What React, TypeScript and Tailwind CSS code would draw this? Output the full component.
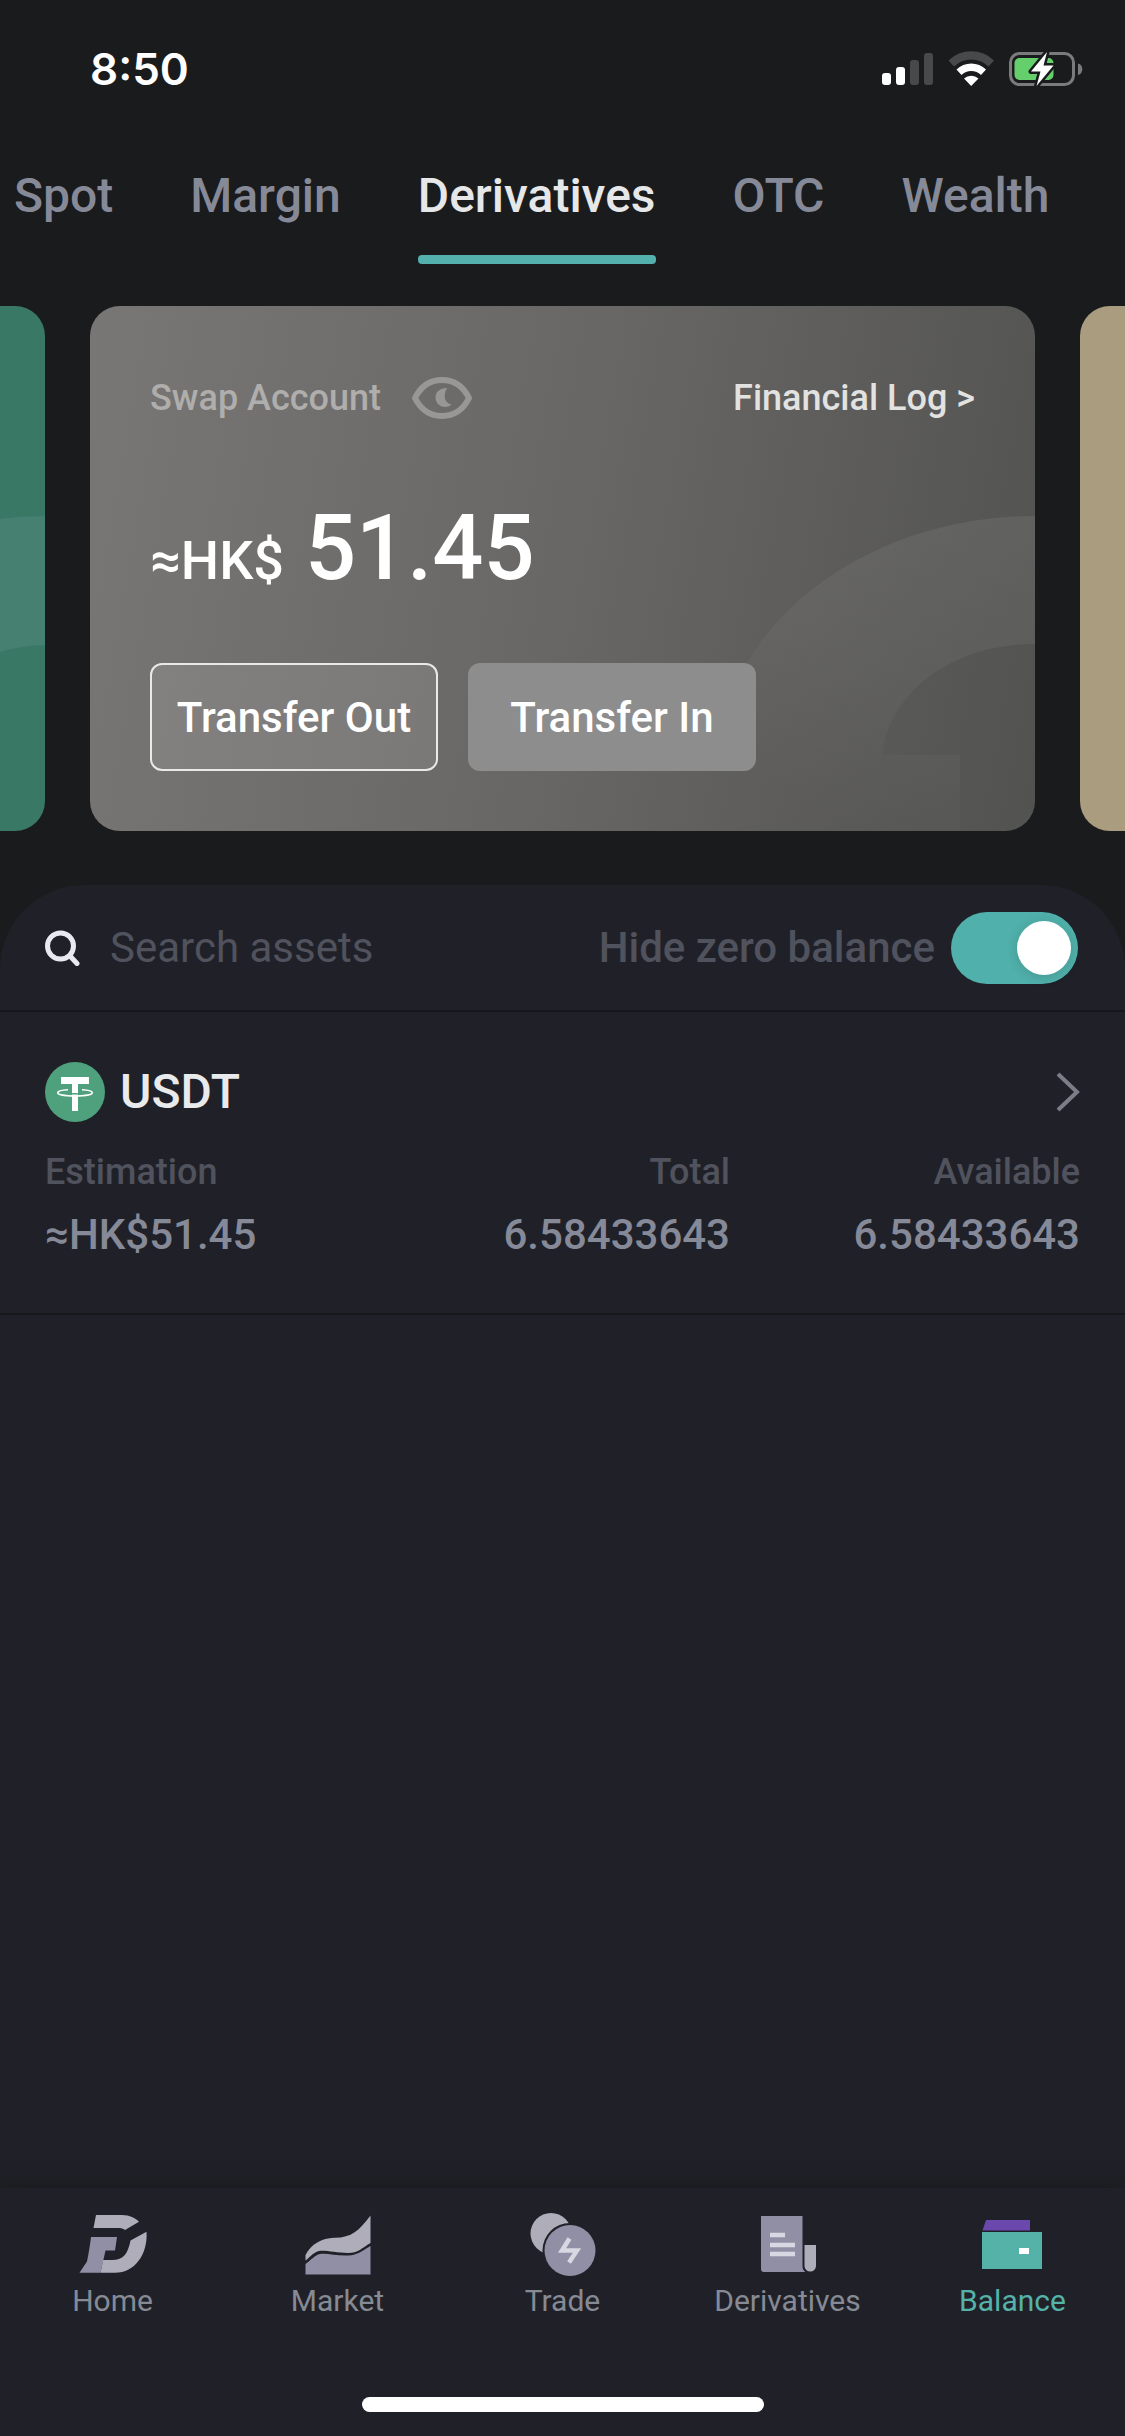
import { useState } from "react";
import type { ReactNode } from "react";

const tabs = ["Spot", "Margin", "Derivatives", "OTC", "Wealth"];

const assets = [
  {
    symbol: "USDT",
    estimation: "≈HK$51.45",
    total: "6.58433643",
    available: "6.58433643",
  },
];

function StatusBar() {
  return (
    <div className="flex items-center justify-between h-[132px] pt-10 pb-[34px] pl-[90px] pr-[41px]">
      <span className="font-['Inter',sans-serif] text-[44px] font-semibold leading-[56px] text-white">
        8:50
      </span>
      <svg width="202" height="36" viewBox="0 0 202 36" aria-hidden="true">
        <rect x="0" y="22" width="9" height="12" rx="3" fill="#fff" />
        <rect x="14" y="16" width="9" height="18" rx="3" fill="#fff" />
        <rect x="28" y="9" width="9" height="25" rx="3" fill="#48494b" />
        <rect x="42" y="2" width="9" height="32" rx="3" fill="#48494b" />
        <path
          d="M66.5 9.5A32.5 32.5 0 0 1 112 9.5L106.5 15.5A24.5 24.5 0 0 0 72 15.5Z"
          fill="#48494b"
        />
        <path
          d="M74.5 18.5A21 21 0 0 1 104 18.5L99 24A14 14 0 0 0 79.5 24Z"
          fill="#fff"
        />
        <path d="M82 27.5A11 11 0 0 1 96.5 27.5L89.2 35Z" fill="#fff" />
        <rect
          x="128.5"
          y="2.5"
          width="63"
          height="31"
          rx="9"
          fill="none"
          stroke="#7b7b7d"
          strokeWidth="3"
        />
        <path d="M196 12.5a6 6 0 0 1 0 11.5Z" fill="#7b7b7d" />
        <rect x="132.5" y="7" width="39" height="22" rx="5" fill="#65d06b" />
        <path
          d="M165 1L149 20.5h9.5L154.5 35L171.5 14.5h-10Z"
          fill="#fff"
          stroke="#1a1b1d"
          strokeWidth="5"
          strokeLinejoin="round"
          paintOrder="stroke"
        />
      </svg>
    </div>
  );
}

interface AccountTabsProps {
  active: string;
  onSelect: (tab: string) => void;
}

function AccountTabs({ active, onSelect }: AccountTabsProps) {
  return (
    <nav className="flex gap-[77px] pl-[14px] pt-[34px] overflow-hidden">
      {tabs.map((tab) => (
        <button
          key={tab}
          onClick={() => onSelect(tab)}
          className={`flex flex-col gap-[29px] shrink-0 text-[48px] leading-[60px] font-medium ${
            tab === active ? "text-[#e6e7e9]" : "text-[#868a98]"
          }`}
        >
          {tab}
          {tab === active && (
            <span className="block h-[9px] w-full rounded-[4px] bg-[#54b0ad]" />
          )}
        </button>
      ))}
    </nav>
  );
}

function CardRing({ className }: { className: string }) {
  return (
    <svg
      className={className}
      width="320"
      height="315"
      viewBox="0 0 320 315"
      aria-hidden="true"
    >
      <defs>
        <linearGradient id="ring" x1="0.8" y1="0" x2="0.3" y2="1">
          <stop offset="0" stopColor="#fff" stopOpacity="0.07" />
          <stop offset="0.5" stopColor="#fff" stopOpacity="0.04" />
          <stop offset="0.95" stopColor="#fff" stopOpacity="0" />
        </linearGradient>
      </defs>
      <path
        d="M320 0A320 260 0 0 0 0 260V315H245V239H167C173 182 230 128 320 128Z"
        fill="url(#ring)"
      />
    </svg>
  );
}

function AccountCard() {
  return (
    <section className="relative flex-1 flex flex-col h-[525px] px-[60px] pt-[68px] pb-[60px] rounded-[30px] overflow-hidden bg-linear-100 from-[#797776] via-[#686765] to-[#525251]">
      <CardRing className="absolute right-0 bottom-0" />
      <div className="relative flex items-center justify-between text-[36px] leading-[48px]">
        <div className="flex items-center gap-[30px]">
          <h2 className="font-medium text-[#afaeac]">Swap Account</h2>
          <button aria-label="Hide balance">
            <svg width="62" height="44" viewBox="0 0 62 44" aria-hidden="true">
              <path
                d="M4 22C10 10 20 4 31 4s21 6 27 18c-6 12-16 18-27 18S10 34 4 22Z"
                fill="none"
                stroke="#989796"
                strokeWidth="6"
                strokeLinejoin="round"
              />
              <path
                d="M36 12c-7 0-11.5 4-11.5 9.500S29 31 34 31c3 0 5-1 6.500-2.500C33 27 32 19 36 12Z"
                fill="#989796"
              />
            </svg>
          </button>
        </div>
        <a href="#log" className="font-medium text-[#e2e2e1]">
          Financial Log &gt;
        </a>
      </div>
      <p className="relative flex items-baseline gap-[21px] mt-[67px] font-medium leading-[120px] text-white">
        <span className="text-[54px]">≈HK$</span>
        <span className="text-[90px]">51.45</span>
      </p>
      <div className="relative mt-auto flex gap-[30px] text-[42px] font-medium text-white">
        <button className="h-[108px] w-72 rounded-xl border-2 border-[#e9e9e8] bg-white/10">
          Transfer Out
        </button>
        <button className="h-[108px] w-72 rounded-xl bg-[#8d8d8d]">
          Transfer In
        </button>
      </div>
    </section>
  );
}

function PreviousCard() {
  return (
    <div className="w-[45px] rounded-r-[30px] overflow-hidden bg-[#3a7866]">
      <svg className="mt-[210px]" width="45" height="136" viewBox="0 0 45 136" aria-hidden="true">
        <path d="M0 3Q22 0 45 0V129Q18 130 0 136Z" fill="#458070" />
      </svg>
    </div>
  );
}

interface FilterBarProps {
  hideZero: boolean;
  onToggle: (value: boolean) => void;
}

function FilterBar({ hideZero, onToggle }: FilterBarProps) {
  return (
    <div className="flex items-center justify-between h-[127px] pl-[45px] pr-[47px] border-b-2 border-[#16161b]">
      <label className="flex items-center gap-[30px]">
        <svg width="35" height="36" viewBox="0 0 35 36" aria-hidden="true">
          <circle cx="15.5" cy="16" r="13" fill="none" stroke="#e9e9f2" strokeWidth="5" />
          <path d="M25 26l7 7.500" stroke="#e9e9f2" strokeWidth="5" strokeLinecap="round" />
        </svg>
        <input
          type="text"
          aria-label="Search assets"
          placeholder="Search assets"
          className="w-[400px] bg-transparent text-[42px] leading-[54px] text-white outline-none placeholder:text-[#50525d]"
        />
      </label>
      <label className="flex items-center gap-4 text-[42px] leading-[54px] font-medium text-[#50525d]">
        Hide zero balance
        <input
          type="checkbox"
          role="switch"
          checked={hideZero}
          onChange={(e) => onToggle(e.target.checked)}
          className="peer sr-only"
        />
        <span className="flex items-center h-[72px] w-[127px] p-[7px] rounded-full bg-[#484a55] peer-checked:bg-[#50b0ab] peer-checked:justify-end">
          <span className="size-[54px] rounded-full bg-white shadow-[0_2px_12px_rgba(0,0,0,0.15)]" />
        </span>
      </label>
    </div>
  );
}

function TetherIcon() {
  return (
    <svg width="60" height="60" viewBox="0 0 60 60" aria-hidden="true">
      <circle cx="30" cy="30" r="30" fill="#4fa07c" />
      <path d="M16 15h28v7H33v27h-6V22H16Z" fill="#fff" />
      <path
        d="M23 27.7C16 28 12.700 29.300 12.700 30.700C12.700 32.600 20 34 30 34S47.300 32.600 47.300 30.700C47.300 29.300 44 28 37 27.700"
        fill="none"
        stroke="#fff"
        strokeWidth="1.600"
      />
      <path d="M26 31.800h8" stroke="#4fa07c" strokeWidth="1.500" />
    </svg>
  );
}

interface AssetFieldProps {
  label: string;
  value: string;
  className?: string;
}

function AssetField({ label, value, className = "flex-1" }: AssetFieldProps) {
  return (
    <div className={`flex flex-col gap-[9px] ${className}`}>
      <dt className="text-[36px] leading-[48px] font-medium text-[#50525d]">{label}</dt>
      <dd className="text-[42px] leading-[60px] font-medium text-[#868a98]">{value}</dd>
    </div>
  );
}

function AssetRow({ asset }: { asset: (typeof assets)[number] }) {
  return (
    <li className="px-[45px] pt-[50px] pb-[48px] border-b-2 border-[#16161b]">
      <button className="flex w-full items-center justify-between">
        <span className="flex items-center gap-[15px]">
          <TetherIcon />
          <span className="text-[48px] leading-[56px] font-medium text-[#e9eaec]">
            {asset.symbol}
          </span>
        </span>
        <svg width="24" height="40" viewBox="0 0 24 40" aria-hidden="true">
          <path d="M2 2l19 18L2 38" fill="none" stroke="#7c7d87" strokeWidth="4" />
        </svg>
      </button>
      <dl className="flex mt-[26px]">
        <AssetField label="Estimation" value={asset.estimation} />
        <AssetField label="Total" value={asset.total} className="flex-1 text-right" />
        <AssetField label="Available" value={asset.available} className="w-[350px] text-right" />
      </dl>
    </li>
  );
}

function HomeIcon() {
  return (
    <svg width="72" height="66" viewBox="0 0 72 66" aria-hidden="true">
      <path d="M19 5H45C53 5 58 8 62 11.700L48 20C46 18.500 44 18 41 18H16.500Z" fill="#aeadb9" />
      <path
        d="M69.500 21.700C71 44 58 62.700 38 62.700H23.500L26 50H35C47 50 51 43 53.500 30.500Z"
        fill="#aeadb9"
      />
      <path d="M14 27H40L38 40.500H28.500L23.500 62.700H2.500L10 51.500C11.500 44 13 36 14 27Z" fill="#918fa6" />
    </svg>
  );
}

function MarketIcon() {
  return (
    <svg width="72" height="66" viewBox="0 0 72 66" aria-hidden="true">
      <path
        d="M3.500 50.500V45C9 34 20 28 32 27.700C49 28 57 21 68.500 5.500V33C60 38 56 43 46 43C34 43 24 40 17 41C12 42 8 47 3.500 50.500Z"
        fill="#aeadb9"
      />
      <path
        d="M3.500 54C9 50 13 45 18 44C26 43 34 46 46 45.500C56 45 60 41 68.500 36V64.500H3.500Z"
        fill="#918fa6"
      />
    </svg>
  );
}

function TradeIcon() {
  return (
    <svg width="72" height="66" viewBox="0 0 72 66" aria-hidden="true">
      <circle cx="24" cy="23.500" r="20.500" fill="#aeadb9" />
      <circle cx="43" cy="40.500" r="27.500" fill="#202128" />
      <circle cx="43" cy="40.500" r="25.500" fill="#918fa6" />
      <path
        d="M42.500 28.500l-7.500 12h15l-8 12"
        fill="none"
        stroke="#d8d7e2"
        strokeWidth="4.500"
      />
    </svg>
  );
}

function DerivativesIcon() {
  return (
    <svg width="72" height="66" viewBox="0 0 72 66" aria-hidden="true">
      <path d="M9 6H50.500V56Q50.500 60 53.500 62H12Q9 62 9 59Z" fill="#918fa6" />
      <path d="M52.500 35H64V56a5.700 5.500 0 0 1-11.500 0Z" fill="#aeadb9" />
      <path d="M18 25h15M18 35h25M18 44h25" stroke="#d8d7e2" strokeWidth="4.500" />
    </svg>
  );
}

function BalanceIcon() {
  return (
    <svg width="72" height="66" viewBox="0 0 72 66" aria-hidden="true">
      <path d="M9 10H53V20.500H5.500Z" fill="#6b48ae" />
      <path d="M5 22H65V59H5Z" fill="#54b2a8" />
      <path d="M42 38h10v6H42Z" fill="#fff" />
    </svg>
  );
}

interface NavItemProps {
  label: string;
  icon: ReactNode;
  active?: boolean;
}

function NavItem({ label, icon, active = false }: NavItemProps) {
  return (
    <a
      href={`#${label.toLowerCase()}`}
      className={`flex-1 flex flex-col items-center gap-[5px] text-[30px] leading-[40px] ${
        active ? "text-[#54b2a8]" : "text-[#868a94]"
      }`}
    >
      {icon}
      {label}
    </a>
  );
}

function BottomNav() {
  return (
    <footer className="flex flex-col items-center pb-6 bg-[#202128] shadow-[0_-4px_16px_rgba(24,25,26,0.8)]">
      <nav className="flex w-full pt-[22px] mb-[76px]">
        <NavItem label="Home" icon={<HomeIcon />} />
        <NavItem label="Market" icon={<MarketIcon />} />
        <NavItem label="Trade" icon={<TradeIcon />} />
        <NavItem label="Derivatives" icon={<DerivativesIcon />} />
        <NavItem label="Balance" icon={<BalanceIcon />} active />
      </nav>
      <div className="h-[15px] w-[402px] rounded-full bg-white" />
    </footer>
  );
}

export default function App() {
  const [tab, setTab] = useState("Derivatives");
  const [hideZero, setHideZero] = useState(true);

  return (
    <div className="min-h-screen flex flex-col overflow-hidden bg-[#1a1b1d] font-['Roboto',sans-serif]">
      <StatusBar />
      <AccountTabs active={tab} onSelect={setTab} />
      <div className="flex gap-[45px] mt-[42px]">
        <PreviousCard />
        <AccountCard />
        <div className="w-[45px] rounded-l-[30px] bg-[#a99c7f]" />
      </div>
      <main className="flex-1 mt-[54px] rounded-t-[84px] bg-[#202128]">
        <FilterBar hideZero={hideZero} onToggle={setHideZero} />
        <ul>
          {assets.map((asset) => (
            <AssetRow key={asset.symbol} asset={asset} />
          ))}
        </ul>
      </main>
      <BottomNav />
    </div>
  );
}
